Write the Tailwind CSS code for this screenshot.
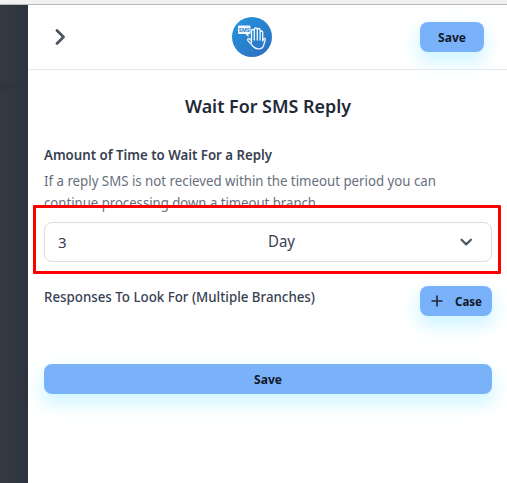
<!DOCTYPE html>
<html lang="en">
<head>
<meta charset="utf-8">
<title>Wait For SMS Reply</title>
<script src="https://cdn.jsdelivr.net/npm/@tailwindcss/browser@4"></script>
</head>
<body class="relative flex h-[483px] w-[507px] flex-col overflow-hidden bg-white font-['Noto_Sans',sans-serif] text-[#1f2937]">
<div class="h-[5px] shrink-0 border-b border-[#b8b8b8] bg-[#f1f1f1]"></div>
<div class="flex min-h-0 flex-1">
  <aside class="flex w-7 shrink-0 flex-col bg-linear-to-r from-[#343a43] to-[#2e343d]">
    <div class="h-[78px]"></div>
    <div class="h-1.5 bg-[#2e353e]"></div>
  </aside>
  <main class="flex min-w-0 flex-1 flex-col overflow-hidden">
    <header class="grid h-[65px] shrink-0 grid-cols-3 items-center border-b border-[#e5e7eb] pr-[23px] pl-[26px]">
      <svg class="h-5 w-3" viewBox="0 0 12 20" fill="none" stroke="#4b5563" stroke-width="2.8" stroke-linecap="round" stroke-linejoin="round"><path d="M3 3.5 9.500 10 3 16.500"/></svg>
      <svg class="ml-[35px] size-10" viewBox="0 0 40 40" fill="none">
        <defs><linearGradient id="g" x1="0" y1="0" x2="1" y2="1"><stop stop-color="#2496e0"/><stop offset="1" stop-color="#2d6dbd"/></linearGradient></defs>
        <circle cx="20" cy="20" r="20" fill="url(#g)"/>
        <path d="M7 8.500h10.500a1 1 0 0 1 1 1v6.500a1 1 0 0 1-1 1h-1v3l-3.200-3H7a1 1 0 0 1-1-1V9.500a1 1 0 0 1 1-1z" fill="#f2f8fd"/>
        <text x="6.700" y="15" font-size="6" font-weight="700" fill="#2d7fc8" textLength="11" lengthAdjust="spacingAndGlyphs">SMS</text>
        <path d="M19.500 25.500V14q0-1.500 1.400-1.500t1.400 1.500v9M22.300 14v-1.500q0-1.500 1.500-1.500t1.500 1.500V23M25.300 13q0-1.500 1.400-1.500t1.400 1.500v10M28.100 15.500q0-1.500 1.300-1.500t1.300 1.500V24q.8-3 2-2.700 1 .3.200 2.500l-1.300 4.700q-1 3.200-4.500 3.300-3.500.3-5.600-2l-5.600-6.200q-.8-1.200.2-1.900 1-.4 2 .6l1.400 1.500" stroke="#f1f8fe" stroke-width="1.300" stroke-linecap="round" stroke-linejoin="round"/>
      </svg>
      <button class="mt-0.5 mb-0.5 h-[30px] w-16 justify-self-end rounded-lg bg-[#7ab2fa] shadow-[0_8px_18px_2px_#cff5ff]"><svg class="mx-auto block h-5 w-7 overflow-visible"><text x="0" y="14.500" font-size="12.500" font-weight="700" fill="#111827" textLength="28" lengthAdjust="spacingAndGlyphs">Save</text></svg></button>
    </header>
    <section class="flex flex-col pr-[15px] pl-4">
      <h1 class="mt-[23px] flex h-7 justify-center"><svg class="block h-7 w-[166px] overflow-visible"><text x="0" y="20" font-size="18" font-weight="600" fill="#1f2937" textLength="166" lengthAdjust="spacingAndGlyphs">Wait For SMS Reply</text></svg></h1>
      <h2 class="mt-6 h-5"><svg class="block h-5 w-[228px] overflow-visible"><text x="0" y="15" font-size="13.500" font-weight="600" fill="#374151" textLength="228" lengthAdjust="spacingAndGlyphs">Amount of Time to Wait For a Reply</text></svg></h2>
      <p class="mt-[5px] h-[46px]"><svg class="block h-[46px] w-[392px] overflow-visible" font-size="14" fill="#66707e"><text x="0" y="16" textLength="392" lengthAdjust="spacingAndGlyphs">If a reply SMS is not recieved within the timeout period you can</text><text x="0" y="38" textLength="272" lengthAdjust="spacingAndGlyphs">continue processing down a timeout branch</text></svg></p>
      <div class="mt-[6px] flex h-10 items-center rounded-lg border border-[#d9dce3] px-[13px] text-[15px] text-[#374151]">
        <span class="w-[210px]">3</span>
        <span class="-mt-0.5 flex-1"><svg class="block h-6 w-7 overflow-visible"><text x="0" y="17.500" font-size="16" fill="#374151" textLength="27" lengthAdjust="spacingAndGlyphs">Day</text></svg></span>
        <svg class="mr-[4px] h-4 w-4" viewBox="0 0 16 16" fill="none" stroke="#4b5563" stroke-width="2.200" stroke-linecap="round" stroke-linejoin="round"><path d="m3.500 5.700 4.700 4.700 4.700-4.700"/></svg>
      </div>
      <div class="mt-6 flex h-[30px] justify-between">
        <h2 class="mt-px"><svg class="block h-5 w-[271px] overflow-visible"><text x="0" y="15" font-size="13.500" font-weight="500" fill="#374151" textLength="271" lengthAdjust="spacingAndGlyphs">Responses To Look For (Multiple Branches)</text></svg></h2>
        <button class="flex w-[72px] items-center rounded-lg bg-[#7ab2fa] pl-[11px] shadow-[0_8px_18px_2px_#cff5ff]">
          <svg class="h-3 w-3" viewBox="0 0 12 12" stroke="#1f2937" stroke-width="1.600"><path d="M.5 6h11M6 .5v11"/></svg>
          <svg class="ml-3 block h-5 w-7 overflow-visible"><text x="0" y="14.500" font-size="12.500" font-weight="700" fill="#111827" textLength="27" lengthAdjust="spacingAndGlyphs">Case</text></svg>
        </button>
      </div>
      <button class="mt-12 h-[30px] rounded-lg bg-[#7ab2fa] shadow-[0_8px_18px_2px_#cff5ff]"><svg class="mx-auto block h-5 w-7 overflow-visible"><text x="0" y="14.500" font-size="12.500" font-weight="700" fill="#111827" textLength="28" lengthAdjust="spacingAndGlyphs">Save</text></svg></button>
    </section>
  </main>
</div>
<div class="pointer-events-none absolute top-[205px] left-[33px] h-[69px] w-[468px] rounded-[1px] border-3 border-[#ff0000]"></div>
</body>
</html>
